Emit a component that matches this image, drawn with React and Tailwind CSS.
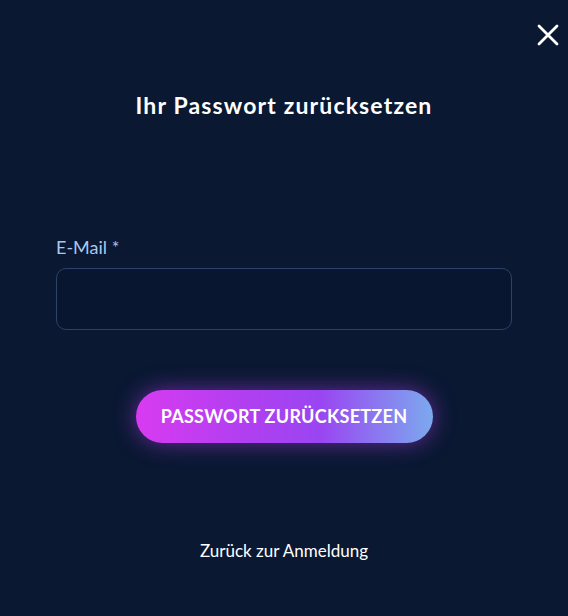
import React, { useState } from "react";

export default function App() {
  const [email, setEmail] = useState("");

  return (
    <div
      className="relative w-full min-h-[616px] bg-[#0a1832] text-white"
      style={{ fontFamily: "Lato, 'Noto Sans', sans-serif" }}
    >
      <button className="absolute right-[4px] top-[19px] p-1 text-white" aria-label="Schließen">
        <svg width="24" height="24" viewBox="0 0 24 24" fill="none" stroke="currentColor" strokeWidth="2.8" strokeLinecap="round">
          <path d="M3 3L21 21M21 3L3 21" />
        </svg>
      </button>

      <div className="flex flex-col px-14 pt-[91px]">
        <h2 className="text-center text-[23px] font-bold tracking-[0.05em] leading-[28px]">
          Ihr Passwort zurücksetzen
        </h2>

        <form className="mt-[117px] flex flex-col" onSubmit={(e) => e.preventDefault()}>
          <label className="text-[18px] leading-[22px] text-[#a9c7f2]">E-Mail *</label>
          <input
            type="email"
            value={email}
            onChange={(e) => setEmail(e.target.value)}
            className="mt-[10px] h-[62px] w-full rounded-[10px] border border-[#2c4268] bg-[#091630] px-4 text-white outline-none"
          />

          <div className="mt-[60px] flex justify-center">
            <button
              type="submit"
              className="h-[53px] w-[297px] rounded-full bg-[linear-gradient(90deg,#d83bf0_0%,#b23ff0_35%,#9a45f2_62%,#7ca9ee_100%)] text-[18px] font-bold tracking-[0.015em] text-white shadow-[0_0_22px_rgba(180,60,240,0.55)]"
            >
              PASSWORT ZURÜCKSETZEN
            </button>
          </div>
        </form>

        <div className="mt-[95px] flex justify-center">
          <a href="#" className="text-[17px] text-white">Zurück zur Anmeldung</a>
        </div>
      </div>
    </div>
  );
}
